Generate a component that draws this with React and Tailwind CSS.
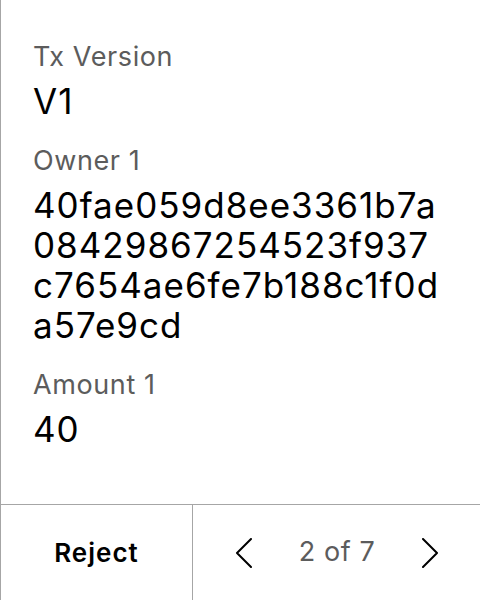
import React from 'react';

// hex values wrap where the device wrapped them
const fields = [
  { label: 'Tx Version', lines: ['V1'] },
  {
    label: 'Owner 1',
    lines: ['40fae059d8ee3361b7a', '08429867254523f937', 'c7654ae6fe7b188c1f0d', 'a57e9cd'],
  },
  { label: 'Amount 1', lines: ['40'] },
];

const Chevron = ({ dir }) => (
  <svg width="17" height="30" viewBox="0 0 17 30" fill="none" stroke="#000" strokeWidth="2" strokeLinecap="round" strokeLinejoin="round">
    {dir === 'left' ? <path d="M16 1 L2 15 L16 29" /> : <path d="M1 1 L15 15 L1 29" />}
  </svg>
);

const App = () => {
  return (
    <div className="h-[600px] w-[480px] flex flex-col bg-white border-l border-[#a6a6a6] font-['Inter',sans-serif]">
      {/* transaction details */}
      <div className="flex-1 flex flex-col gap-[24px] pl-[32px] pr-4 pt-[41px]">
        {fields.map((field) => (
          <div key={field.label} className="flex flex-col gap-[8px]">
            <div className="text-[27px] leading-[32px] tracking-[0.6px] text-[#5c5c5c]">{field.label}</div>
            <div className="text-[35px] leading-[40px] tracking-[1px] text-black whitespace-nowrap">
              {field.lines.map((line) => (
                <div key={line}>{line}</div>
              ))}
            </div>
          </div>
        ))}
      </div>

      {/* footer actions */}
      <div className="h-24 flex border-t border-[#a6a6a6]">
        <button className="w-[192px] flex items-center justify-center text-[26px] font-semibold tracking-[1px] text-black border-r border-[#a6a6a6]">
          Reject
        </button>
        <div className="flex-1 flex items-center justify-between pl-[42px] pr-[41px]">
          <Chevron dir="left" />
          <span className="text-[27px] tracking-[0.6px] text-[#5c5c5c]">2 of 7</span>
          <Chevron dir="right" />
        </div>
      </div>
    </div>
  );
};

export default App;
